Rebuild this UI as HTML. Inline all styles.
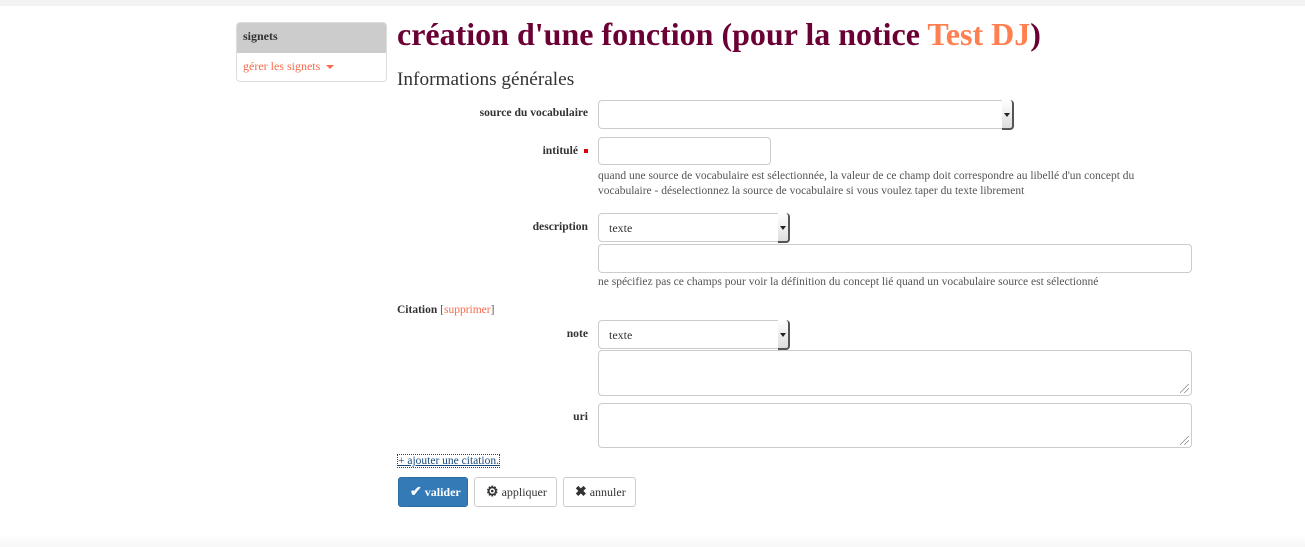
<!DOCTYPE html><html><head><meta charset="utf-8"><style>
body{margin:0;width:1305px;height:547px;background:#fff;font-family:"Liberation Serif",serif;position:relative;overflow:hidden;color:#333}
.a{position:absolute}
.lbl{position:absolute;right:717px;font-size:11.6px;font-weight:bold;color:#333}
.inp{position:absolute;left:598px;border:1px solid #ccc;border-radius:4px;background:#fff;box-sizing:border-box}
.sel{position:absolute;left:598px;border:1px solid #ccc;border-radius:4px;background:#fff;box-sizing:border-box;font-size:12px;padding:7px 0 0 10px}
.sel:after{content:"";position:absolute;right:-2px;top:-1px;width:10px;height:28px;border-right:2px solid #555;border-bottom:2px solid #555;border-radius:0 4px 4px 0;background:linear-gradient(#fff,#ddd)}
.sel i{position:absolute;right:2px;top:12px;width:0;height:0;border-left:3px solid transparent;border-right:3px solid transparent;border-top:4px solid #222;z-index:2}
.help{position:absolute;left:598px;font-size:11.5px;color:#555;line-height:15px}
.btn{position:absolute;top:477px;height:30px;box-sizing:border-box;border:1px solid #ccc;border-radius:3px;font-size:12px;line-height:28px;color:#333;background:#fff}
.btn b{font-size:14px}
.grip{position:absolute;right:2px;bottom:2px;width:9px;height:9px;background:linear-gradient(135deg,transparent 45%,#888 45%,#888 52%,transparent 52%,transparent 70%,#888 70%,#888 77%,transparent 77%)}
</style></head><body>
<div class="a" style="left:0;top:0;width:1305px;height:6px;background:#f3f3f3"></div>
<div class="a" style="left:0;top:535px;width:1305px;height:12px;background:linear-gradient(#fff,#f7f7f7)"></div>
<div class="a" style="left:236px;top:22px;width:149px;height:58px;border:1px solid #ddd;border-radius:4px;overflow:hidden">
<div style="height:30px;background:#ccc;font-size:12px;font-weight:bold;padding:6px 0 0 6px;box-sizing:border-box;color:#333">signets</div>
<div style="font-size:12px;color:#f96a4a;padding:6px 0 0 6px">gérer les signets <span style="display:inline-block;border-left:4px solid transparent;border-right:4px solid transparent;border-top:4px solid #f96a4a;vertical-align:middle;margin-left:3px"></span></div></div>
<div class="a" style="left:397px;top:16px;font-size:32px;font-weight:bold;color:#6b0034;white-space:nowrap">création d'une fonction (pour la notice <span style="color:#ff7f50">Test DJ</span>)</div>
<div class="a" style="left:397px;top:69px;font-size:19.3px;color:#333">Informations générales</div>
<div class="lbl" style="top:106px">source du vocabulaire</div>
<div class="sel" style="top:100px;width:415px;height:29px"><i></i></div>
<div class="lbl" style="top:144px;right:727px">intitulé</div>
<div class="a" style="left:584px;top:149px;width:4px;height:4px;background:#d00"></div>
<div class="inp" style="top:137px;width:173px;height:28px"></div>
<div class="help" style="top:169px">quand une source de vocabulaire est sélectionnée, la valeur de ce champ doit correspondre au libellé d'un concept du<br>vocabulaire - déselectionnez la source de vocabulaire si vous voulez taper du texte librement</div>
<div class="lbl" style="top:220px">description</div>
<div class="sel" style="top:213px;width:191px;height:29px">texte<i></i></div>
<div class="inp" style="top:244px;width:594px;height:29px"></div>
<div class="help" style="top:275px">ne spécifiez pas ce champs pour voir la définition du concept lié quand un vocabulaire source est sélectionné</div>
<div class="a" style="left:397px;top:304px;font-size:11.5px;font-weight:bold">Citation <span style="font-weight:normal;color:#555">[<span style="color:#f96a4a">supprimer</span>]</span></div>
<div class="lbl" style="top:327px">note</div>
<div class="sel" style="top:320px;width:191px;height:29px">texte<i></i></div>
<div class="inp" style="top:350px;width:594px;height:46px"><div class="grip"></div></div>
<div class="lbl" style="top:410px">uri</div>
<div class="inp" style="top:403px;width:594px;height:45px"><div class="grip"></div></div>
<div class="a" style="left:398px;top:455px;font-size:11.5px;color:#1a4a7a;text-decoration:underline;outline:1px dotted #1a4a7a">+ ajouter une citation.</div>
<div class="btn" style="left:398px;width:70px;background:#337ab7;border-color:#2e6da4;color:#fff;font-weight:bold;padding-left:11px"><b>✔</b> valider</div>
<div class="btn" style="left:474px;width:83px;padding-left:11px"><b>⚙</b> appliquer</div>
<div class="btn" style="left:563px;width:73px;padding-left:11px"><b>✖</b> annuler</div>
</body></html>
